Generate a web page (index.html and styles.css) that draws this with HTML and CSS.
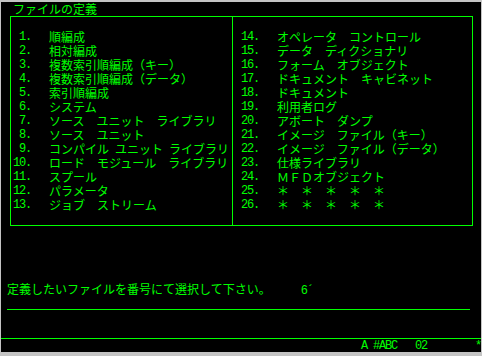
FILE: index.html
```html
<!DOCTYPE html>
<html lang="ja">
<head>
    <meta charset="UTF-8">
    <meta name="viewport" content="width=device-width, initial-scale=1.0">
    <title>ファイルの定義</title>
    <link rel="stylesheet" href="styles.css">
</head>
<body>
    <div class="screen">
        <div class="row title">ファイルの定義</div>

        <div class="frame">
            <ol class="col col-left">
                <li class="item"><span class="num">1.</span><span class="name">順編成</span></li>
                <li class="item"><span class="num">2.</span><span class="name">相対編成</span></li>
                <li class="item"><span class="num">3.</span><span class="name">複数索引順編成（キー）</span></li>
                <li class="item"><span class="num">4.</span><span class="name">複数索引順編成（データ）</span></li>
                <li class="item"><span class="num">5.</span><span class="name">索引順編成</span></li>
                <li class="item"><span class="num">6.</span><span class="name">システム</span></li>
                <li class="item"><span class="num">7.</span><span class="name">ソース　ユニット　ライブラリ</span></li>
                <li class="item"><span class="num">8.</span><span class="name">ソース　ユニット</span></li>
                <li class="item"><span class="num">9.</span><span class="name">コンパイル<span class="h"> </span>ユニット<span class="h"> </span>ライブラリ</span></li>
                <li class="item"><span class="num">10.</span><span class="name">ロード　モジュール　ライブラリ</span></li>
                <li class="item"><span class="num">11.</span><span class="name">スプール</span></li>
                <li class="item"><span class="num">12.</span><span class="name">パラメータ</span></li>
                <li class="item"><span class="num">13.</span><span class="name">ジョブ　ストリーム</span></li>
            </ol>
            <ol class="col col-right">
                <li class="item"><span class="num">14.</span><span class="name">オペレータ　コントロール</span></li>
                <li class="item"><span class="num">15.</span><span class="name">データ　ディクショナリ</span></li>
                <li class="item"><span class="num">16.</span><span class="name">フォーム　オブジェクト</span></li>
                <li class="item"><span class="num">17.</span><span class="name">ドキュメント　キャビネット</span></li>
                <li class="item"><span class="num">18.</span><span class="name">ドキュメント</span></li>
                <li class="item"><span class="num">19.</span><span class="name">利用者ログ</span></li>
                <li class="item"><span class="num">20.</span><span class="name">アボート　ダンプ</span></li>
                <li class="item"><span class="num">21.</span><span class="name">イメージ　ファイル（キー）</span></li>
                <li class="item"><span class="num">22.</span><span class="name">イメージ　ファイル（データ）</span></li>
                <li class="item"><span class="num">23.</span><span class="name">仕様ライブラリ</span></li>
                <li class="item"><span class="num">24.</span><span class="name">ＭＦＤオブジェクト</span></li>
                <li class="item"><span class="num">25.</span><span class="name">＊　＊　＊　＊　＊</span></li>
                <li class="item"><span class="num">26.</span><span class="name">＊　＊　＊　＊　＊</span></li>
            </ol>
        </div>

        <div class="row prompt">定義したいファイルを番号にて選択して下さい。<span class="h answer">6´</span></div>
        <div class="rule"></div>

        <div class="status h">A #ABC   02        *</div>
    </div>
</body>
</html>
```

FILE: styles.css
```css
body {
    margin: 0;
    background-color: #c4c4c4;
}
.screen {
    width: 480px;
    height: 350px;
    margin: 2px 1px 4px 1px;
    background-color: #000;
    color: #00ff00;
    font-family: "Noto Sans CJK JP", sans-serif;
    font-size: 12px;
    line-height: 14px;
    overflow: hidden;
}
.h,
.num {
    font-family: "Liberation Mono", monospace;
    font-size: 12px;
    letter-spacing: -1.2px;
    white-space: pre;
}
.row {
    height: 14px;
    white-space: pre;
}
.title {
    padding-left: 12px;
}
.frame {
    display: flex;
    width: 461px;
    margin-left: 9px;
    border: 1px solid #00ff00;
}
.col {
    list-style: none;
    margin: 0;
    padding: 13px 0;
}
.col-left {
    width: 219px;
    padding-left: 2px;
    border-right: 1px solid #00ff00;
}
.col-right {
    flex: 1;
    padding-left: 8px;
}
.item {
    display: flex;
    height: 14px;
    white-space: pre;
}
.num {
    width: 18px;
    text-align: right;
}
.name {
    margin-left: 18px;
}
.prompt {
    margin-top: 56px;
    padding-left: 6px;
}
.answer {
    margin-left: 30px;
}
.rule {
    width: 463px;
    height: 13px;
    margin-left: 6px;
    border-bottom: 1px solid #00ff00;
}
.status {
    display: block;
    margin-top: 28px;
    height: 13px;
    line-height: 14px;
    padding-left: 360px;
    border-top: 1px solid #00ff00;
}
```
